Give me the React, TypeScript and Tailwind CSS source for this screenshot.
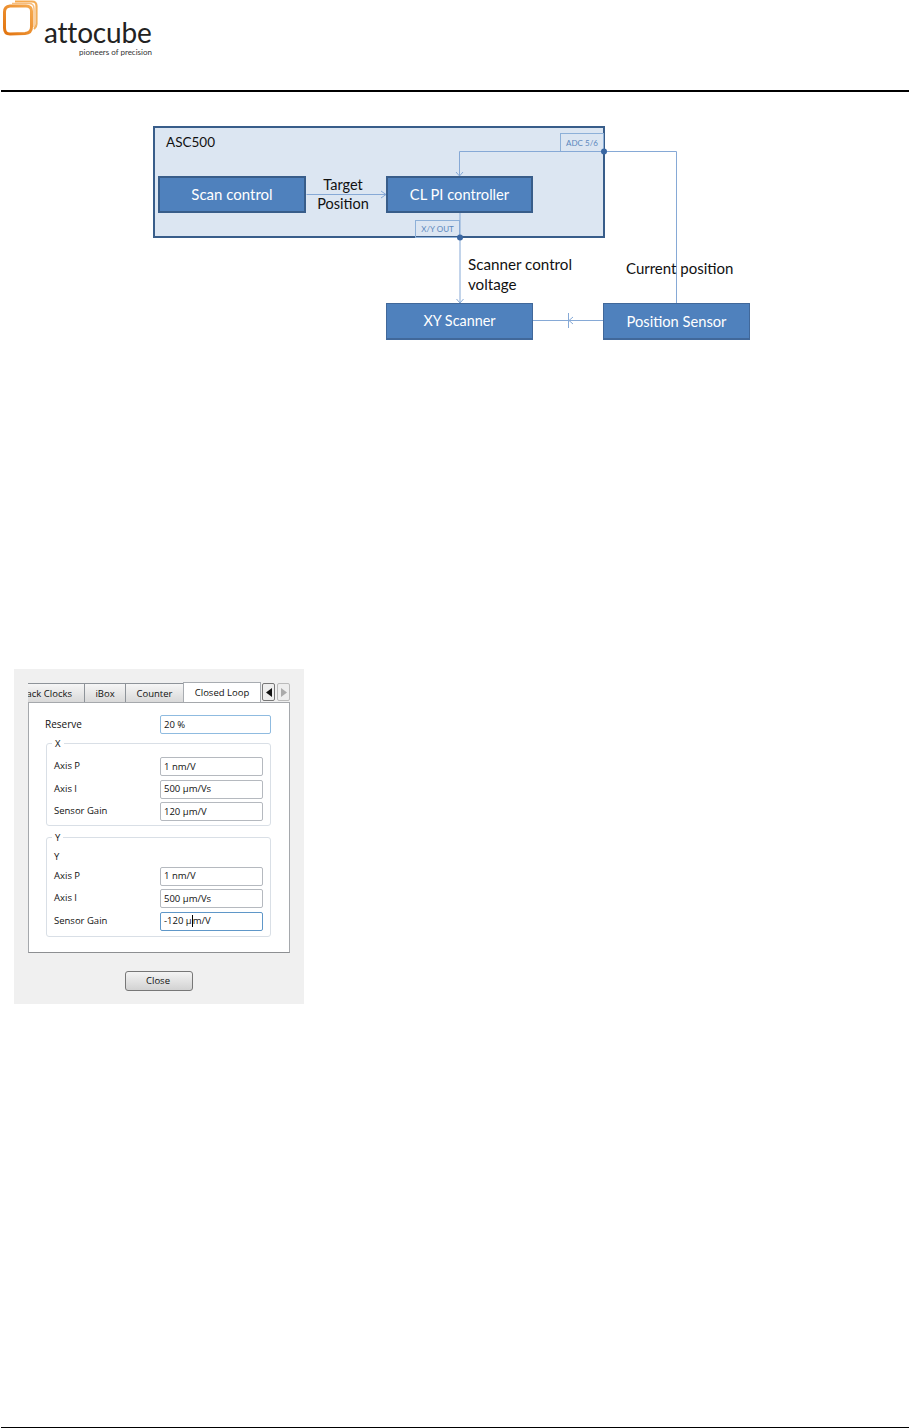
import React from "react";

const Block = ({ cls, children }: { cls: string; children: React.ReactNode }) => (
  <div className={`absolute flex items-center justify-center bg-[#4f81bd] text-white ${cls}`}>{children}</div>
);

const Logo = () => (
  <svg width="40" height="40" viewBox="0 0 40 40" className="absolute left-0 top-0">
    <defs>
      <linearGradient id="o1" x1="0" y1="0" x2="1" y2="1">
        <stop offset="0" stopColor="#f7a84a" />
        <stop offset="1" stopColor="#f0b060" />
      </linearGradient>
      <linearGradient id="o2" x1="0" y1="1" x2="1" y2="0">
        <stop offset="0" stopColor="#e2740f" />
        <stop offset="1" stopColor="#f5aa50" />
      </linearGradient>
    </defs>
    <path d="M15 1.5 H32 Q36.5 1.5 36.5 6 V24 Q36.5 27 34 29" fill="none" stroke="url(#o1)" strokeWidth="2.2" />
    <path d="M12 3.5 H29 Q34 3.5 34 8.5 V27" fill="none" stroke="#f7bd7c" strokeWidth="1.4" />
    <path d="M10 6 H26 Q31.5 6 31.5 11 V27 Q31.5 33 25 33.5 L10 34 Q4.5 34 4.5 28 V12 Q4.5 6.5 10 6 Z" fill="none" stroke="url(#o2)" strokeWidth="3" />
  </svg>
);

const Diagram = () => (
  <div className="relative h-[217px] mt-[34px] font-['Lato','Open_Sans',sans-serif] text-[#111]">
    <div className="absolute left-[153px] top-0 w-[452px] h-[112px] bg-[#dce6f2] border-2 border-[#385d8a]" />
    <div className="absolute left-[166px] top-[7px] text-[13.5px] leading-[18px]">ASC500</div>
    <Block cls="left-[158px] top-[50px] w-[148px] h-[37px] border-2 border-[#385d8a] text-[15px]">Scan control</Block>
    <Block cls="left-[386px] top-[50px] w-[147px] h-[37px] border-2 border-[#385d8a] text-[14.7px]">CL PI controller</Block>
    <Block cls="left-[386px] top-[177px] w-[147px] h-[37px] border border-[#41689a] border-b-2 text-[14.4px]">XY Scanner</Block>
    <Block cls="left-[603px] top-[177px] w-[147px] h-[37px] border border-[#41689a] border-b-2 text-[14.7px]">Position Sensor</Block>
    <div className="absolute left-[303px] top-[49px] w-[80px] text-center text-[14.5px] leading-[19px]">Target<br />Position</div>
    <div className="absolute left-[560px] top-[7px] w-[44px] h-[19px] border border-[#8db0d8] flex items-center justify-center text-[8px] text-[#5b87bd]">ADC 5/6</div>
    <div className="absolute left-[415px] top-[94px] w-[45px] h-[18px] border border-[#8db0d8] flex items-center justify-center text-[8px] text-[#5b87bd]">X/Y OUT</div>
    <svg width="910" height="217" className="absolute left-0 top-0" fill="none" stroke="#86a9d6" strokeWidth="1">
      <path d="M306.5 68.5H386M381 65l5 3.5-5 3.5" />
      <path d="M604 25.5H459.5V50M456 46l3.5 4 3.5-4" />
      <path d="M604 25.5H676.5V177" />
      <path d="M460 87V177M456.500 173l3.500 4 3.500-4" />
      <path d="M533 194.500H603M573 191l-4 3.500 4 3.500M568.500 187v15" />
      <circle cx="604" cy="25.500" r="3" fill="#3a67a3" stroke="none" />
      <circle cx="460" cy="111.500" r="3" fill="#3a67a3" stroke="none" />
    </svg>
    <div className="absolute left-[468px] top-[129px] text-[15.2px] leading-[19.500px]">Scanner control<br />voltage</div>
    <div className="absolute left-[626px] top-[133px] text-[15px] leading-[19px]">Current position</div>
  </div>
);

const Field = ({ value, cls = "border-[#b5b9bf]", w = "w-[103px]", h = "h-[19px]" }: { value: React.ReactNode; cls?: string; w?: string; h?: string }) => (
  <div className={`${w} ${h} bg-white border rounded-[2px] pl-[3px] flex items-center text-[9.5px] leading-none ${cls}`}>{value}</div>
);

const Row = ({ label, value, cls }: { label: string; value: React.ReactNode; cls?: string }) => (
  <div className="flex items-center">
    <div className="w-[106px] text-[9.5px] leading-none -mt-[1px]">{label}</div>
    <Field value={value} cls={cls} />
  </div>
);

const Group = ({ title, cls, children }: { title: string; cls: string; children: React.ReactNode }) => (
  <div className={`relative ml-[17px] w-[225px] border border-[#d9dfe6] rounded-[3px] pl-[7px] flex flex-col gap-[3.5px] ${cls}`}>
    <span className="absolute left-[5px] -top-[6px] bg-white px-[3px] text-[9.5px] leading-[12px]">{title}</span>
    {children}
  </div>
);

const Tab = ({ w, children }: { w: string; children: React.ReactNode }) => (
  <div className={`${w} h-[19px] mt-[1px] shrink-0 border border-b-0 border-[#8e9399] bg-gradient-to-b from-[#f6f6f6] to-[#d9d9d9] flex items-center justify-center pt-[1px] text-[9.5px] leading-none -ml-[1px]`}>{children}</div>
);

const Dialog = () => (
  <div className="ml-[14px] mt-[326px] w-[290px] h-[335px] bg-[#f0f0f0] pt-[13px] pl-[14px] font-['Open_Sans',sans-serif] text-[#111]">
    <div className="flex h-[20px] items-end w-[262px]">
      <div className="w-[57px] h-[19px] mt-[1px] shrink-0 border-r border-t border-[#8e9399] bg-gradient-to-b from-[#f6f6f6] to-[#d9d9d9] flex items-center justify-end pr-[12px] pt-[1px] text-[9.5px] leading-none overflow-hidden whitespace-nowrap">ack Clocks</div>
      <Tab w="w-[42px]">iBox</Tab>
      <Tab w="w-[59px]">Counter</Tab>
      <div className="w-[78px] h-[20px] -ml-[1px] shrink-0 border border-b-0 border-[#a8acb1] bg-white flex items-center justify-center text-[9.500px] leading-none">Closed Loop</div>
      <div className="ml-[1px] w-[13px] h-[18px] shrink-0 border border-[#777] rounded-[2px] bg-[#eeeeee] flex items-center justify-center mb-[1px]">
        <svg width="6" height="9" viewBox="0 0 6 9"><path d="M6 0V9L0 4.500Z" fill="#111" /></svg>
      </div>
      <div className="ml-[2px] w-[13px] h-[18px] shrink-0 border border-[#bbb] rounded-[2px] bg-[#eeeeee] flex items-center justify-center mb-[1px]">
        <svg width="6" height="9" viewBox="0 0 6 9"><path d="M0 0V9L6 4.500Z" fill="#aaa" /></svg>
      </div>
    </div>
    <div className="w-[262px] h-[251px] bg-white border border-[#a5a8ac] border-b-[#8d8f92] pt-[12px]">
      <div className="flex items-center pl-[16px]">
        <div className="w-[115px] text-[10px] leading-none -mt-[1px]">Reserve</div>
        <Field value="20 %" w="w-[111px]" cls="border-[#8fbbe0]" />
      </div>
      <Group title="X" cls="mt-[9px] h-[83px] pt-[13px]">
        <Row label="Axis P" value="1 nm/V" />
        <Row label="Axis I" value="500 µm/Vs" />
        <Row label="Sensor Gain" value="120 µm/V" />
      </Group>
      <Group title="Y" cls="mt-[11px] h-[100px] pt-[12px]">
        <div className="h-[13px] text-[9.500px] leading-[13px]">Y</div>
        <Row label="Axis P" value="1 nm/V" />
        <Row label="Axis I" value="500 µm/Vs" />
        <Row label="Sensor Gain" cls="border-[#5f97c8]" value={<>-120 µ<span className="inline-block w-[1px] h-[12px] bg-black" />m/V</>} />
      </Group>
    </div>
    <div className="mt-[18px] ml-[97px] w-[68px] h-[20px] border border-[#777] rounded-[3px] bg-gradient-to-b from-[#f4f4f4] to-[#d2d2d2] flex items-center justify-center text-[9.500px] leading-none pr-[2px]">Close</div>
  </div>
);

export default function App() {
  return (
    <div className="w-[910px] h-[1428px] bg-white flex flex-col overflow-hidden">
      <header className="relative h-[90px] shrink-0">
        <Logo />
        <div className="absolute left-[44px] top-[19px] text-[28px] leading-[27px] tracking-[-0.2px] text-[#222] font-['Lato',sans-serif]">attocube</div>
        <div className="absolute left-[79px] top-[47px] text-[8px] leading-[10px] text-[#333] font-['Lato',sans-serif]">pioneers of precision</div>
      </header>
      <div className="mx-[1px] h-[2px] bg-black shrink-0" />
      <Diagram />
      <Dialog />
      <div className="mt-auto mx-[1px] h-[1px] bg-black shrink-0" />
    </div>
  );
}
